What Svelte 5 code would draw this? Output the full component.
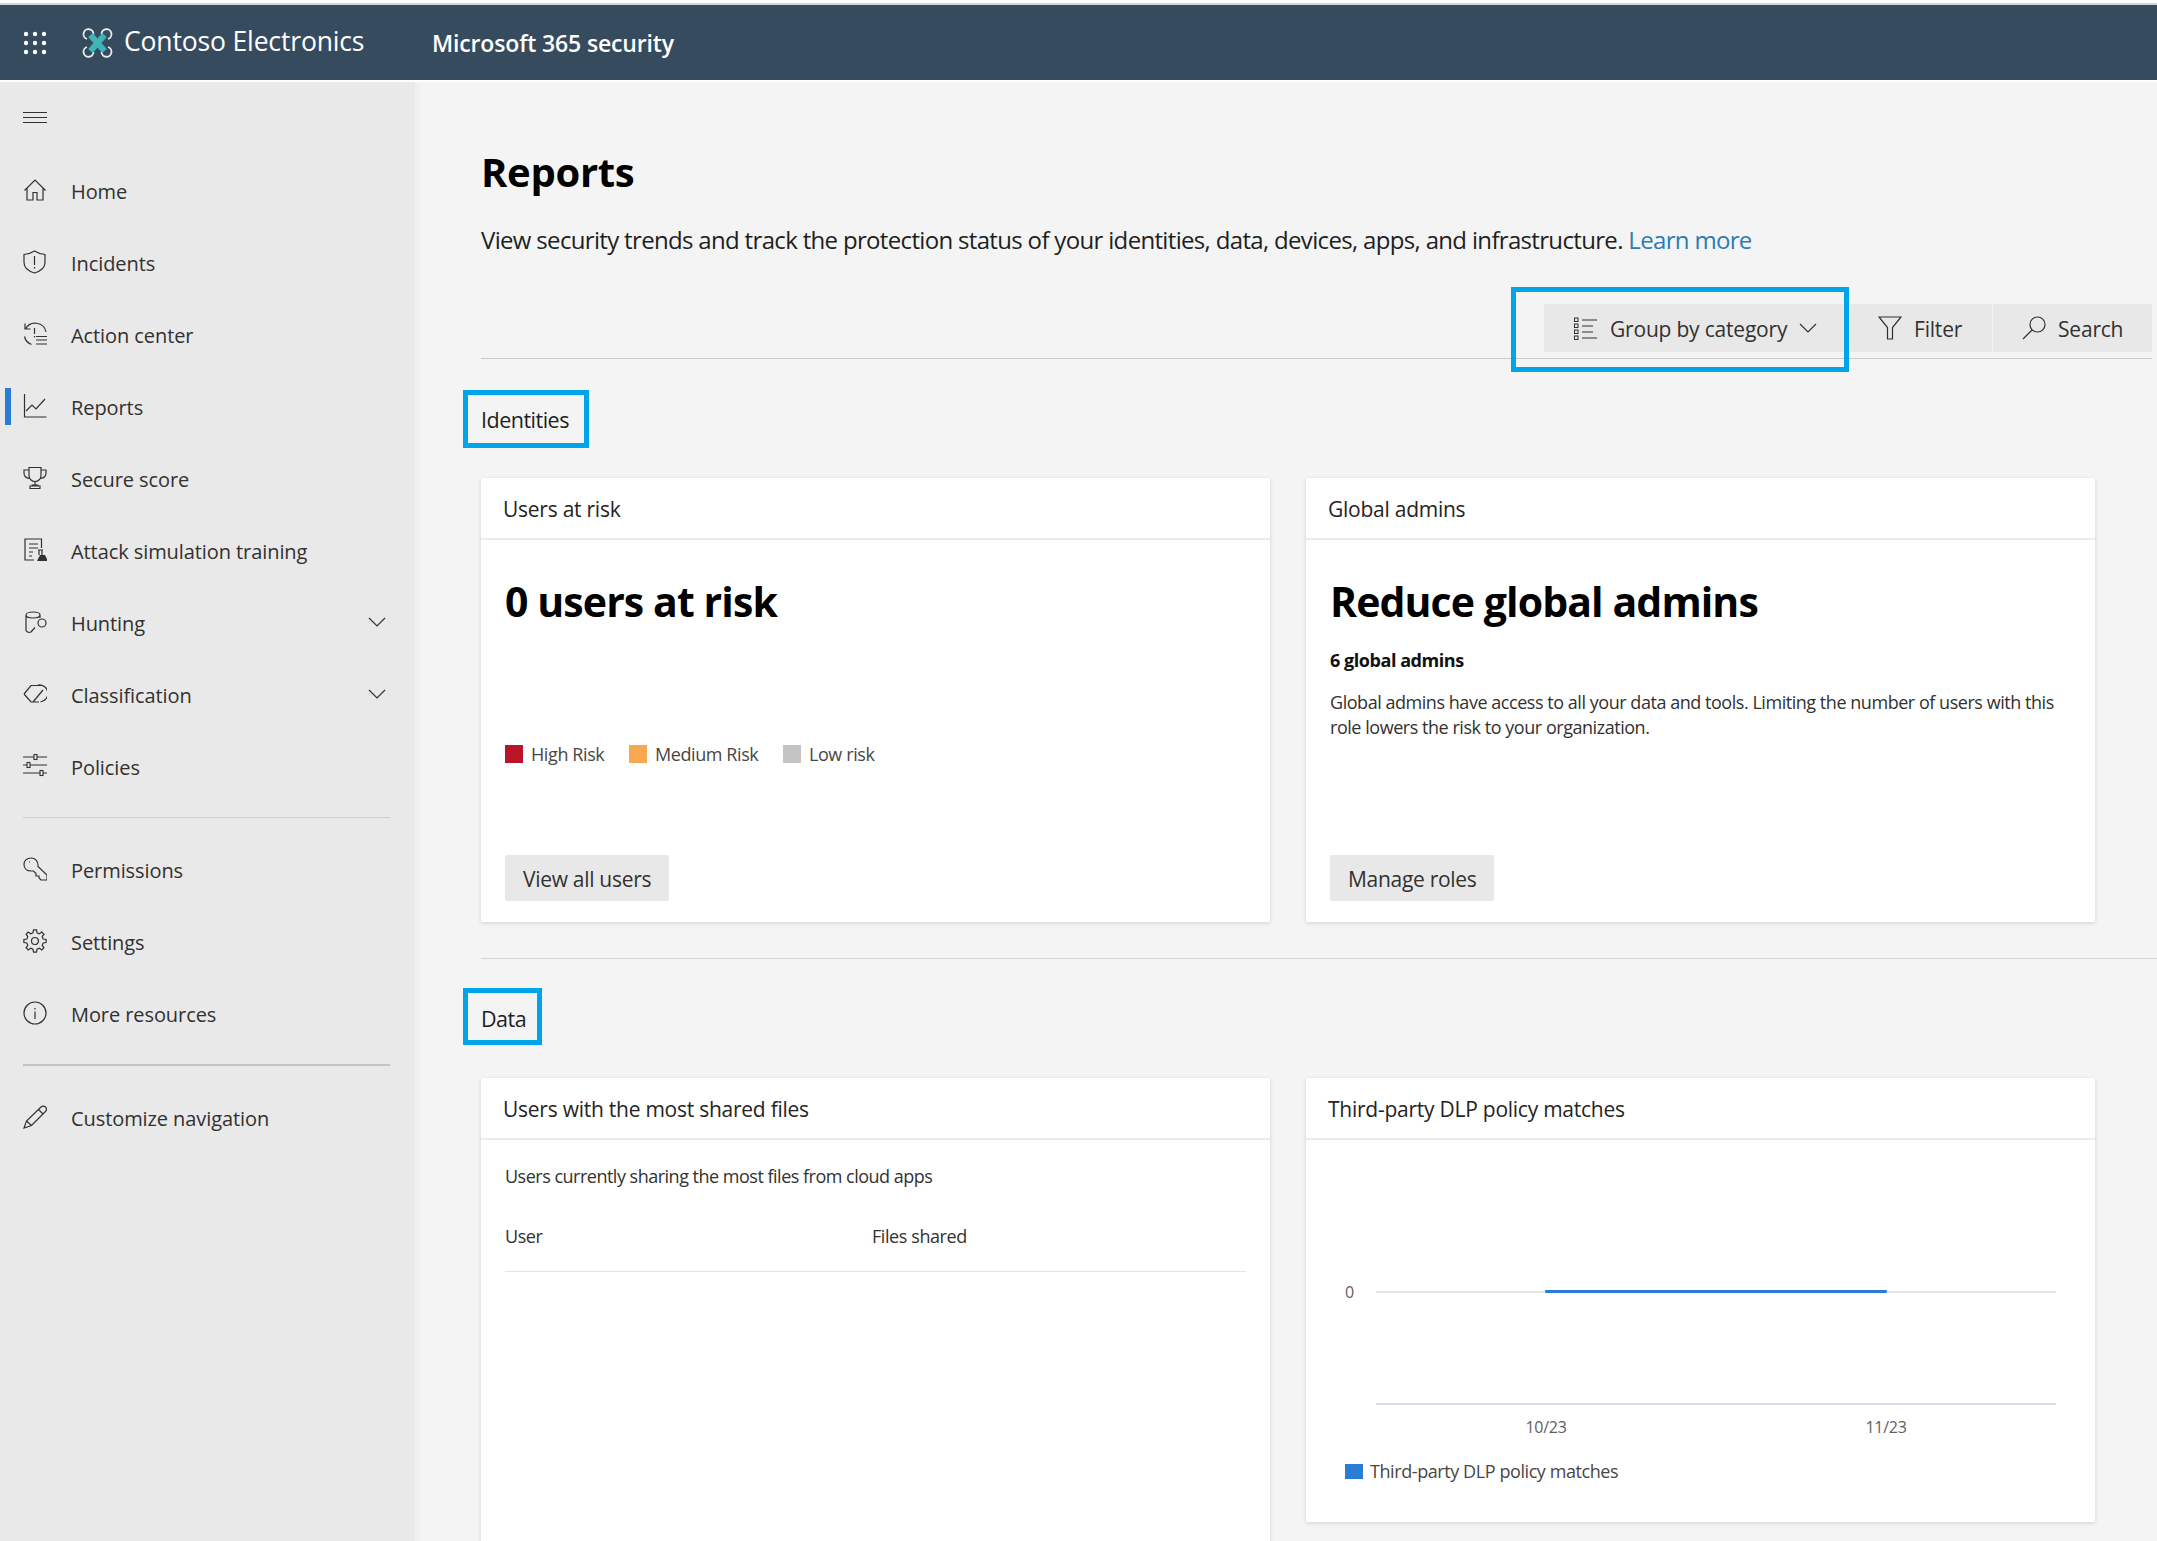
<script>
  const gear = (() => {
    let d = '';
    const n = 8, c = 12, ro = 11.2, ri = 8.4;
    for (let i = 0; i < n; i++) {
      const a = (i / n) * Math.PI * 2 - Math.PI / 2;
      const w = Math.PI / n;
      const pts = [[ri, a - w * 0.62], [ro, a - w * 0.34], [ro, a + w * 0.34], [ri, a + w * 0.62]];
      for (const [r, t] of pts) {
        d += (d ? 'L' : 'M') + (c + r * Math.cos(t)).toFixed(2) + ' ' + (c + r * Math.sin(t)).toFixed(2);
      }
    }
    return d + 'Z M15.5 12a3.5 3.5 0 1 1-7 0 3.5 3.5 0 0 1 7 0z';
  })();

  const icons = {
    home: 'M1.5 12.5 12 2l10.5 10.5M4 10.5V22h6v-7.5h4V22h6V10.5',
    shield: 'M11.5 1c3 2 6 3 10.500 3.500v8c0 5-4 8.500-10.500 10.500C5 21 1 17.500 1 12.500v-8C5 4 8.500 3 11.500 1zM11.500 6v9M11.500 17v1.500',
    action: 'M2.500 7A11 11 0 0 1 23 10M2 1.500V7h5.500M1.500 14.500A11 11 0 0 0 8.500 22.500M11.500 6v6M11.500 14v1.500M13 14.500h11M13 18h11M13 22h11',
    reports: 'M1.500 0v23h22M3 17l6-6 4 4 9-10',
    trophy: 'M6 1.500h12v8a6 6 0 0 1-12 0zM6 4H1v3c0 3 2 5 5.500 5.500M18 4h5v3c0 3-2 5-5.500 5.500M12 15.500v3.500M8.500 19h7M7 22.500h10V20H7z',
    attack: 'M18.500 10V1H2v21h9M6 6h9M6 10h9M6 14h4M6 18h3M15 12h5M16 12v5M19 12v5',
    hunting: 'M3 5c0-4 14-4 14 0s-14 4-14 0M3 5v15c0 1.500 2 2.300 4 2.500M17 5v3M12 17.500l-4.500 5M23 13a4 4 0 1 1-8 0 4 4 0 0 1 8 0z',
    tag: 'M1 12 8 3.500h10.500M1 12l7 8h8M15 3a8.500 8.500 0 1 1 2.500 17M20 8 10 20',
    policies: 'M0 3h24M0 11h24M0 19h24',
    key: 'M8 1C3.500 1 1 4 1 7.500 1 11.500 4 14 8 14h2.500l2.500 2.500V19h3v2l2 2h6v-5l-9-8.500C15.500 4 12 1 8 1zM6 5h1',
    gear,
    info: 'M23 12a11 11 0 1 1-22 0 11 11 0 0 1 22 0zM12 10.500V18M12 7v1.500',
    pencil: 'M1 23 3.500 16 18 2a3 3 0 0 1 4.500 4.500L8.500 20.500zM15.500 4.500l4.500 4.500M3.500 16l5 4.500',
    list: 'M8 4h15M8 10h11M8 16h11M8 22h15'
  };

  const top = [
    { t: 'Home', i: 'home' },
    { t: 'Incidents', i: 'shield' },
    { t: 'Action center', i: 'action' },
    { t: 'Reports', i: 'reports', active: true },
    { t: 'Secure score', i: 'trophy' },
    { t: 'Attack simulation training', i: 'attack', flask: true },
    { t: 'Hunting', i: 'hunting', chev: true },
    { t: 'Classification', i: 'tag', chev: true },
    { t: 'Policies', i: 'policies', knobs: true }
  ];
  const mid = [
    { t: 'Permissions', i: 'key' },
    { t: 'Settings', i: 'gear' },
    { t: 'More resources', i: 'info' }
  ];
  const dots = [];
  for (let y = 0; y < 3; y++) for (let x = 0; x < 3; x++) dots.push([3 + x * 9, 3 + y * 9]);
</script>

{#snippet navRow(item)}
  <a class="nav-row" class:active={item.active} href="#top">
    <svg class="nav-icon" viewBox="0 0 24 24" aria-hidden="true">
      <path d={icons[item.i]} />
      {#if item.flask}<path class="solid" d="M14 23l3-6h5l3 6z" />{/if}
      {#if item.knobs}
        <rect class="knob" x="11" y="0.500" width="3" height="5" />
        <rect class="knob" x="4" y="8.500" width="3" height="5" />
        <rect class="knob" x="17" y="16.500" width="3" height="5" />
      {/if}
    </svg>
    <span class="nav-label">{item.t}</span>
    {#if item.chev}
      <svg class="nav-chev" viewBox="0 0 18 10" aria-hidden="true"><path d="M1 1l8 8 8-8" /></svg>
    {/if}
  </a>
{/snippet}

<div class="shell">
  <div class="strip"></div>
  <header class="topbar">
    <svg class="waffle" viewBox="0 0 24 24" aria-hidden="true">
      {#each dots as d}<circle cx={d[0]} cy={d[1]} r="2.200" />{/each}
    </svg>
    <svg class="logo" viewBox="0 0 30 32" aria-hidden="true">
      <g class="rotors">
        <path d="M11 7A5 5 0 1 0 4.500 12" />
        <path d="M19 7A5 5 0 1 1 25.500 12" />
        <path d="M11 25A5 5 0 1 1 4.500 20" />
        <path d="M19 25A5 5 0 1 0 25.500 20" />
      </g>
      <path class="body" d="M8 8 22 24M22 8 8 24" />
    </svg>
    <span class="brand">Contoso Electronics</span>
    <span class="product">Microsoft 365 security</span>
  </header>
  <div class="gap"></div>

  <div class="body-row">
    <nav class="side">
      <div class="burger"><span></span><span></span><span></span></div>
      {#each top as item}{@render navRow(item)}{/each}
      <div class="rule thin"></div>
      {#each mid as item}{@render navRow(item)}{/each}
      <div class="rule thick"></div>
      {@render navRow({ t: 'Customize navigation', i: 'pencil' })}
    </nav>
    <div class="side-edge"></div>

    <main class="main">
      <h1>Reports</h1>
      <p class="intro">View security trends and track the protection status of your identities, data, devices, apps, and infrastructure. <a href="#top">Learn more</a></p>

      <div class="toolbar">
        <button class="tool group">
          <svg class="tool-icon" viewBox="0 0 24 24" aria-hidden="true">
            <path d={icons.list} />
            <rect x="0.500" y="2" width="3.500" height="3.500" />
            <rect x="0.500" y="8" width="3.500" height="3.500" />
            <rect x="0.500" y="14" width="3.500" height="3.500" />
            <rect x="0.500" y="20" width="3.500" height="3.500" />
          </svg>
          <span>Group by category</span>
          <svg class="tool-chev" viewBox="0 0 18 10" aria-hidden="true"><path d="M1 1l8 8 8-8" /></svg>
        </button>
        <button class="tool filter">
          <svg class="tool-icon" viewBox="0 0 24 24" aria-hidden="true"><path d="M1 1h22l-8.500 10.500V23h-5V11.500z" /></svg>
          <span>Filter</span>
        </button>
        <button class="tool search">
          <svg class="tool-icon" viewBox="0 0 24 24" aria-hidden="true"><path d="M23 8.500a7.500 7.500 0 1 1-15 0 7.500 7.500 0 0 1 15 0zM10 14 1 23" /></svg>
          <span>Search</span>
        </button>
        <div class="callout"></div>
      </div>

      <div class="tag-label identities">Identities</div>
      <section class="cards">
        <article class="card short">
          <h3>Users at risk</h3>
          <div class="card-body">
            <h2>0 users at risk</h2>
            <ul class="legend">
              <li><i class="high"></i>High Risk</li>
              <li><i class="med"></i>Medium Risk</li>
              <li><i class="low"></i>Low risk</li>
            </ul>
            <button class="action">View all users</button>
          </div>
        </article>
        <article class="card short">
          <h3>Global admins</h3>
          <div class="card-body">
            <h2>Reduce global admins</h2>
            <p class="count">6 global admins</p>
            <p class="copy">Global admins have access to all your data and tools. Limiting the number of users with this role lowers the risk to your organization.</p>
            <button class="action">Manage roles</button>
          </div>
        </article>
      </section>

      <div class="section-rule"></div>

      <div class="tag-label data">Data</div>
      <section class="cards">
        <article class="card tall">
          <h3>Users with the most shared files</h3>
          <div class="table-body">
            <p class="note">Users currently sharing the most files from cloud apps</p>
            <div class="thead"><span>User</span><span>Files shared</span></div>
          </div>
        </article>
        <article class="card chart-card">
          <h3>Third-party DLP policy matches</h3>
          <div class="chart">
            <div class="plot-row">
              <span class="y-tick">0</span>
              <div class="plot">
                <div class="gridline"><div class="series"></div></div>
              </div>
            </div>
            <div class="x-ticks"><span>10/23</span><span>11/23</span></div>
            <div class="chart-legend"><i></i>Third-party DLP policy matches</div>
          </div>
        </article>
      </section>
    </main>
  </div>
</div>

<style>
  :global(html), :global(body) {
    margin: 0;
    height: 100%;
    overflow: hidden;
  }
  * { box-sizing: border-box; }
  .shell {
    height: 1541px;
    display: flex;
    flex-direction: column;
    overflow: hidden;
    background: #fff;
    font-family: "Open Sans", "Noto Sans", sans-serif;
    color: #323130;
  }
  .strip { height: 5px; flex: none; background: linear-gradient(#fff 0 3px, #d4d4d4 3px); }
  .topbar {
    height: 75px;
    flex: none;
    display: flex;
    align-items: center;
    background: #374b5f;
    color: #fff;
  }
  .waffle { width: 24px; height: 24px; margin-left: 23px; fill: #fff; flex: none; }
  .logo { width: 31px; height: 32px; margin-left: 35px; flex: none; }
  .rotors path { fill: none; stroke: #e8eef2; stroke-width: 1.800; }
  .logo .body { fill: none; stroke: #3fb5b8; stroke-width: 6; }
  .brand { margin-left: 11px; font-size: 26.500px; font-weight: 500; width: 308px; letter-spacing: -0.15px; margin-top: -3px; }
  .product { font-size: 23px; font-weight: 600; letter-spacing: -0.15px; padding-top: 1px; }
  .gap { height: 2px; flex: none; }
  .body-row { flex: 1; display: flex; min-height: 0; }
  .side { width: 415px; flex: none; background: #e9e9e9; }
  .side-edge { width: 5px; flex: none; background: #f0f0f0; }
  .burger {
    height: 73px;
    padding: 30px 0 0 23px;
    display: flex;
    flex-direction: column;
    gap: 4px;
  }
  .burger span { display: block; width: 24px; height: 1px; background: #323130; }
  .nav-row {
    position: relative;
    display: flex;
    align-items: center;
    height: 72px;
    padding: 0 29px 0 23px;
    color: #323130;
    text-decoration: none;
    font-size: 20px;
    letter-spacing: -0.08px;
  }
  .nav-row.active::before {
    content: "";
    position: absolute;
    left: 5px;
    top: 17px;
    width: 6px;
    height: 37px;
    background: #2b7cd3;
  }
  .nav-icon { width: 24px; height: 24px; margin-top: -3px; flex: none; }
  .nav-icon path { fill: none; stroke: #323130; stroke-width: 1.200; }
  .nav-icon .solid { fill: #323130; stroke: none; }
  .nav-icon .knob { fill: #e9e9e9; stroke: #323130; stroke-width: 1.100; }
  .nav-label { margin-left: 24px; flex: 1; }
  .nav-chev { width: 18px; height: 10px; margin-top: -2px; }
  .nav-chev path, .tool-chev path { fill: none; stroke: #323130; stroke-width: 1.200; }
  .rule { margin: 0 25px 0 23px; background: #cfcfcf; }
  .rule.thin { height: 1px; margin-top: 14px; margin-bottom: 16px; }
  .rule.thick { height: 2px; margin-top: 14px; margin-bottom: 16px; background: #c4c4c4; }

  .main {
    flex: 1;
    min-width: 0;
    background: #f4f4f4;
    padding: 66px 0 0 61px;
  }
  h1 {
    margin: 0;
    font-size: 40px;
    line-height: 48px;
    font-weight: 700;
    letter-spacing: -0.3px;
    color: #000;
  }
  .intro {
    margin: 28px 0 0;
    font-size: 24px;
    line-height: 32px;
    letter-spacing: -0.67px;
    color: #201f1e;
    white-space: nowrap;
  }
  .intro a { color: #2b7cb5; text-decoration: none; }
  .toolbar {
    position: relative;
    margin: 48px 5px 0 0;
    padding-bottom: 6px;
    border-bottom: 1px solid #cacaca;
    display: flex;
    justify-content: flex-end;
    gap: 1px;
  }
  .tool {
    height: 48px;
    display: flex;
    align-items: center;
    border: 0;
    border-radius: 2px;
    background: #e8e8e8;
    color: #323130;
    font: inherit;
    font-size: 21px;
    letter-spacing: -0.2px;
    padding: 0;
  }
  .tool span { padding-top: 2px; }
  .tool.group { width: 305px; padding-left: 30px; }
  .tool.filter { width: 142px; padding-left: 28px; }
  .tool.search { width: 159px; padding-left: 29px; }
  .tool-icon { width: 24px; height: 26px; flex: none; margin-right: 12px; }
  .tool-icon path { fill: none; stroke: #323130; stroke-width: 1.200; }
  .tool-icon rect { fill: none; stroke: #323130; stroke-width: 1; }
  .tool-chev { width: 18px; height: 10px; margin-left: 12px; }
  .callout {
    position: absolute;
    left: 1030px;
    top: -17px;
    width: 338px;
    height: 85px;
    border: 5px solid #00a4e8;
    pointer-events: none;
  }
  .tag-label {
    margin: 31px 0 30px -18px;
    height: 58px;
    display: flex;
    align-items: center;
    border: 5px solid #00a4e8;
    padding-left: 13px;
    font-size: 21.500px;
    letter-spacing: -0.5px;
    color: #201f1e;
  }
  .tag-label.identities { width: 126px; }
  .tag-label.data { width: 79px; margin-top: 29px; margin-bottom: 33px; height: 57px; padding-top: 4px; }
  .cards {
    display: grid;
    grid-template-columns: 789px 789px;
    gap: 36px;
    align-items: start;
  }
  .card {
    background: #fff;
    border-radius: 2px;
    box-shadow: 0 1px 4px rgba(0, 0, 0, 0.14);
    display: flex;
    flex-direction: column;
  }
  .card.short { height: 444px; }
  .card.tall { height: 600px; }
  .card.chart-card { height: 444px; }
  h3 {
    margin: 0;
    height: 62px;
    flex: none;
    padding: 2px 22px 0;
    display: flex;
    align-items: center;
    border-bottom: 2px solid #ececec;
    font-size: 21px;
    font-weight: 400;
    letter-spacing: -0.25px;
    color: #252423;
  }
  .card-body {
    flex: 1;
    display: flex;
    flex-direction: column;
    align-items: flex-start;
    padding: 33px 24px 21px;
  }
  h2 {
    margin: 0;
    font-size: 41px;
    line-height: 56px;
    font-weight: 700;
    letter-spacing: -0.9px;
    color: #000;
  }
  .legend {
    margin: 114px 0 0;
    padding: 0;
    list-style: none;
    display: flex;
    gap: 24.500px;
    font-size: 18px;
    line-height: 22px;
    letter-spacing: -0.4px;
    color: #484644;
  }
  .legend li { display: flex; align-items: center; }
  .legend i { width: 18px; height: 18px; margin-right: 8px; display: block; }
  .legend .high { background: #b91428; }
  .legend .med { background: #f7a850; }
  .legend .low { background: #c4c4c4; }
  .action {
    margin-top: auto;
    height: 46px;
    padding: 1px 18px 0;
    border: 0;
    border-radius: 2px;
    background: #e8e8e8;
    color: #323130;
    font: inherit;
    font-size: 21px;
    letter-spacing: -0.3px;
  }
  .count {
    margin: 19px 0 0;
    font-size: 18px;
    line-height: 24px;
    font-weight: 700;
    letter-spacing: -0.45px;
    color: #111;
  }
  .copy {
    margin: 18px 0 0;
    font-size: 18px;
    line-height: 25px;
    letter-spacing: -0.46px;
    color: #323130;
    width: 740px;
  }
  .table-body { padding: 24px 24px 0; }
  .note {
    margin: 0;
    font-size: 18px;
    line-height: 24px;
    letter-spacing: -0.5px;
  }
  .thead {
    margin-top: 36px;
    height: 48px;
    border-bottom: 1px solid #e4e4e4;
    display: grid;
    grid-template-columns: 367px 1fr;
    font-size: 18px;
    line-height: 24px;
    letter-spacing: -0.42px;
  }
  .chart { padding: 140px 0 0 39px; }
  .plot-row { display: flex; align-items: flex-start; }
  .y-tick {
    width: 17px;
    margin-right: 18px;
    margin-left: -4px;
    font-size: 16px;
    line-height: 24px;
    color: #605e5c;
    text-align: center;
  }
  .plot { width: 680px; height: 125px; border-bottom: 2px solid #d4dcec; }
  .gridline { margin-top: 11px; height: 2px; background: #e6e6e6; }
  .series {
    position: relative;
    top: -1px;
    margin-left: 169px;
    width: 342px;
    height: 3px;
    border-radius: 1px;
    background: #2b7cd3;
  }
  .x-ticks {
    margin: 11px 0 0 161px;
    display: flex;
    gap: 260px;
    font-size: 16px;
    line-height: 22px;
    color: #605e5c;
    letter-spacing: -0.3px;
  }
  .x-ticks span { width: 80px; text-align: center; }
  .chart-legend {
    margin-top: 21px;
    display: flex;
    align-items: center;
    font-size: 18px;
    line-height: 24px;
    letter-spacing: -0.42px;
    color: #484644;
  }
  .chart-legend i { width: 18px; height: 15px; margin-right: 7px; background: #2b7cd3; display: block; }
  .section-rule { height: 1px; margin-top: 36px; background: #d4d4d4; }
</style>
